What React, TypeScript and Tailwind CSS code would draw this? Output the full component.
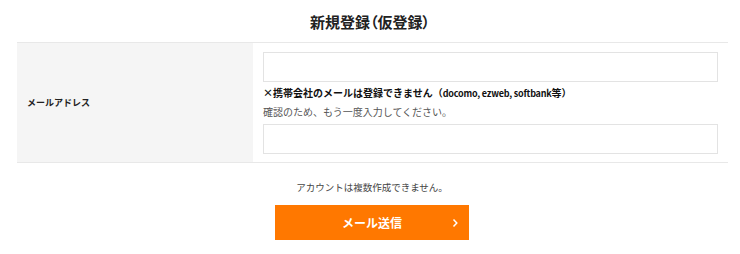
const font = { fontFamily: '"Noto Sans CJK JP", "Noto Sans", sans-serif' };

const EmailInput = () => (
  <input
    type="email"
    className="block w-full h-[30px] border border-[#e3e3e3] bg-white outline-none px-2 text-[12px]"
  />
);

const App = () => {
  return (
    <div className="w-[740px] h-[254px] bg-white text-[#222]" style={font}>
      {/* Title */}
      <h1 className="pt-[10px] h-[42px] text-center text-[15px] leading-[24px] font-bold text-[#222] [font-feature-settings:'palt']">
        新規登録（仮登録）
      </h1>

      {/* Form table */}
      <div className="ml-[17px] w-[711px] flex border-t border-b border-[#e8e8e8]">
        <div className="w-[236px] shrink-0 bg-[#f5f5f5] flex items-center pl-[10px]">
          <span className="text-[9px] font-bold leading-[16px]">メールアドレス</span>
        </div>
        <div className="flex-1 pl-[10px] pr-[10px] pt-[9px] pb-[8px]">
          <EmailInput />
          <p className="mt-[4px] text-[10px] leading-[14px] font-bold text-[#111]">
            ×携帯会社のメールは登録できません（
            <span className="text-[9px] tracking-[-0.2px]">docomo, ezweb, softbank</span>
            等）
          </p>
          <p className="mt-[4px] text-[10px] leading-[14px] text-[#555]">
            確認のため、もう一度入力してください。
          </p>
          <div className="mt-[5px]">
            <EmailInput />
          </div>
        </div>
      </div>

      {/* Footer */}
      <p className="mt-[17px] text-center pl-[4px] text-[9.5px] leading-[14px] text-[#444]">
        アカウントは複数作成できません。
      </p>
      <div className="mt-[11px] flex justify-center pl-[4px]">
        <button className="relative w-[194px] h-[35px] bg-[#ff7800] text-white text-[12px] font-bold">
          メール送信
          <svg
            className="absolute right-[10px] top-1/2 -translate-y-1/2"
            width="8"
            height="10"
            viewBox="0 0 8 10"
            fill="none"
          >
            <path d="M2.5 1.5 L5.8 5 L2.5 8.5" stroke="white" strokeWidth="1.5" />
          </svg>
        </button>
      </div>
    </div>
  );
};

export default App;
